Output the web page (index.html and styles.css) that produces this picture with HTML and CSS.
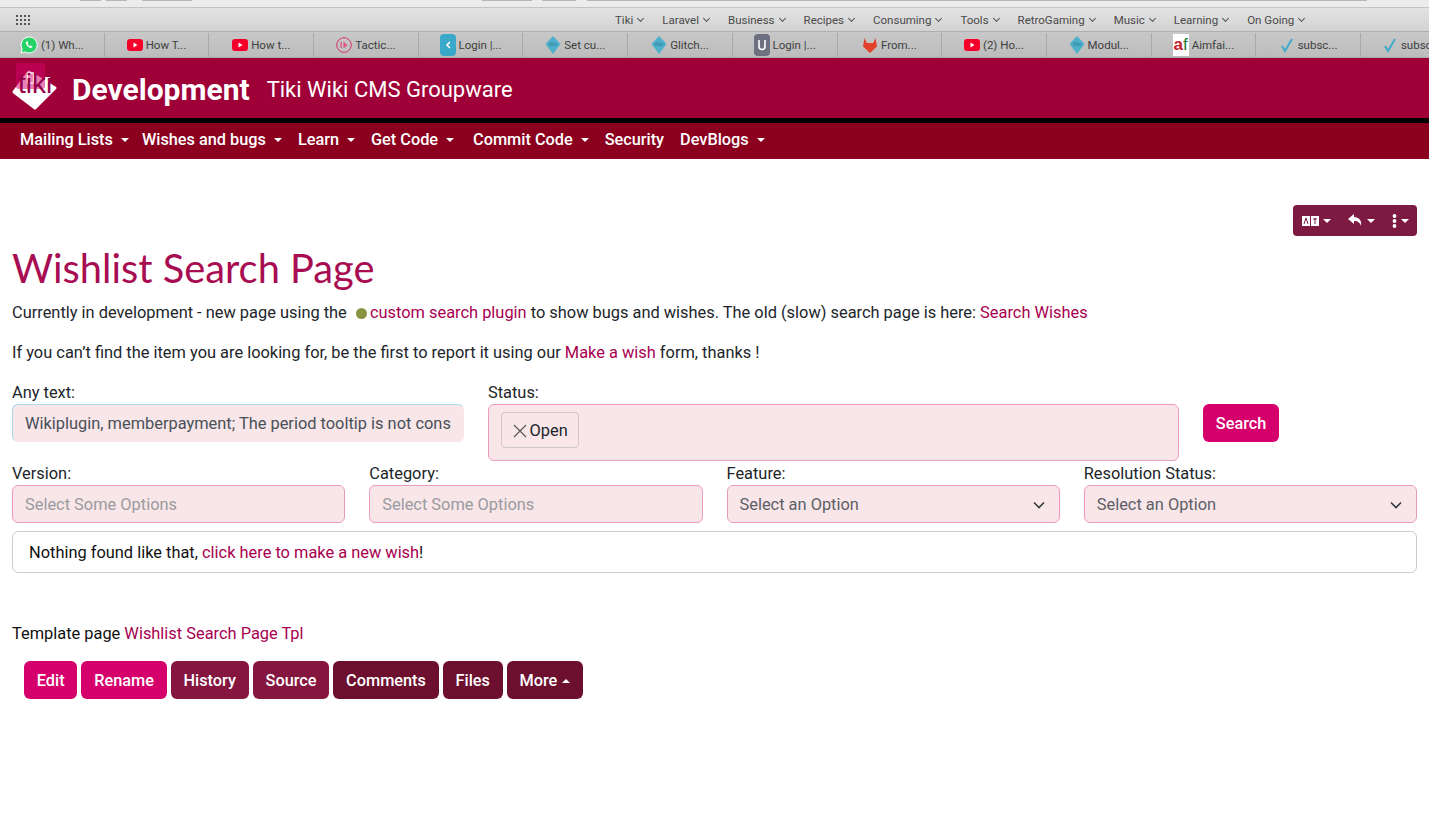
FILE: index.html
```html
<!DOCTYPE html>
<html lang="en">
<head>
  <meta charset="UTF-8">
  <title>Wishlist Search Page</title>
  <link rel="stylesheet" href="styles.css">
</head>
<body>
  <div class="browser-top">
    <span class="top-btn tb1"></span><span class="top-btn tb2"></span><span class="top-btn tb3"></span>
    <span class="top-btn tb4"></span><span class="top-btn tb5"></span><span class="top-url"></span>
  </div>
  <div class="bookmarks">
    <svg class="apps" width="15" height="11" viewBox="0 0 15 11" fill="#555">
      <rect x="0" y="0" width="2" height="2"/><rect x="4" y="0" width="2" height="2"/><rect x="8" y="0" width="2" height="2"/><rect x="12" y="0" width="2" height="2"/>
      <rect x="0" y="4" width="2" height="2"/><rect x="4" y="4" width="2" height="2"/><rect x="8" y="4" width="2" height="2"/><rect x="12" y="4" width="2" height="2"/>
      <rect x="0" y="8" width="2" height="2"/><rect x="4" y="8" width="2" height="2"/><rect x="8" y="8" width="2" height="2"/><rect x="12" y="8" width="2" height="2"/>
    </svg>
    <div class="bookmark-items">
      <span>Tiki<i></i></span><span>Laravel<i></i></span><span>Business<i></i></span><span>Recipes<i></i></span>
      <span>Consuming<i></i></span><span>Tools<i></i></span><span>RetroGaming<i></i></span><span>Music<i></i></span>
      <span>Learning<i></i></span><span>On Going<i></i></span>
    </div>
  </div>
  <div class="tabs">
    <div class="tab"><svg width="18" height="18" viewBox="0 0 18 18"><path d="M9 1a8 8 0 0 0-6.800 12L1 17l4.100-1.100A8 8 0 1 0 9 1z" fill="#25d366" stroke="#fff" stroke-width="1"/><path d="M6.500 5.500c-1 1-.8 2.500.5 4s3 2.700 4.300 2.300c1-.3 1.400-1 1.200-1.500l-1.700-.9-.8.800c-1-.4-2-1.400-2.400-2.400l.7-.8-.8-1.700z" fill="#fff"/></svg>(1) Wh...</div>
    <div class="tab"><svg width="16" height="12" viewBox="0 0 16 12"><rect width="16" height="12" rx="3" fill="#f5002a"/><path d="M6.500 3.500l4 2.500-4 2.500z" fill="#fff"/></svg>How T...</div>
    <div class="tab"><svg width="16" height="12" viewBox="0 0 16 12"><rect width="16" height="12" rx="3" fill="#f5002a"/><path d="M6.500 3.500l4 2.500-4 2.500z" fill="#fff"/></svg>How t...</div>
    <div class="tab"><svg width="16" height="18" viewBox="0 0 16 18"><circle cx="8" cy="9" r="7.300" fill="none" stroke="#d6336c"/><path d="M7.500 5.500l4 3.500-4 3.500z" fill="#e0558a"/><rect x="4.500" y="6" width="1.300" height="6" fill="#e0558a"/></svg>Tactic...</div>
    <div class="tab"><svg width="16" height="22" viewBox="0 0 16 22"><rect width="16" height="22" rx="4" fill="#3aa8c9"/><path d="M10 8l-3 3 3 3" fill="none" stroke="#fff" stroke-width="1.500"/></svg>Login |...</div>
    <div class="tab"><svg width="16" height="20" viewBox="0 0 16 20"><path d="M8 1l7.500 8L8 19 .5 9z" fill="#4fb0cc"/><text x="8" y="11" class="tiny">tiki</text></svg>Set cu...</div>
    <div class="tab"><svg width="16" height="20" viewBox="0 0 16 20"><path d="M8 1l7.500 8L8 19 .5 9z" fill="#4fb0cc"/><text x="8" y="11" class="tiny">tiki</text></svg>Glitch...</div>
    <div class="tab"><svg width="16" height="22" viewBox="0 0 16 22"><rect width="16" height="22" rx="4" fill="#6c7080"/><path d="M5 6v6.500a3 3 0 0 0 6 0V6" fill="none" stroke="#fff" stroke-width="1.600"/></svg>Login |...</div>
    <div class="tab"><svg width="16" height="18" viewBox="0 0 16 18"><path d="M8 17L1 10.500 2.500 2l2.300 5h6.400L13.500 2 15 10.500z" fill="#e2432a"/></svg>From...</div>
    <div class="tab"><svg width="16" height="12" viewBox="0 0 16 12"><rect width="16" height="12" rx="3" fill="#f5002a"/><path d="M6.500 3.500l4 2.500-4 2.500z" fill="#fff"/></svg>(2) Ho...</div>
    <div class="tab"><svg width="16" height="20" viewBox="0 0 16 20"><path d="M8 1l7.500 8L8 19 .5 9z" fill="#4fb0cc"/><text x="8" y="11" class="tiny">tiki</text></svg>Modul...</div>
    <div class="tab"><span class="af"><b>a</b><em>f</em></span>Aimfai...</div>
    <div class="tab"><svg width="16" height="16" viewBox="0 0 16 16"><path d="M3 9l3 5L13 2" fill="none" stroke="#3fa9c9" stroke-width="2"/></svg>subsc...</div>
    <div class="tab tab-cut"><svg width="16" height="16" viewBox="0 0 16 16"><path d="M3 9l3 5L13 2" fill="none" stroke="#3fa9c9" stroke-width="2"/></svg>subsc</div>
  </div>

  <header class="site-header">
    <div class="logo">
      <svg class="logo-mark" width="46" height="48" viewBox="0 0 46 48">
        <path d="M2 28L17 8l26 16-20 20z" fill="#fff" stroke="#fff" stroke-width="3" stroke-linejoin="round"/>
        <rect x="4" y="-1" width="29" height="26" rx="3" fill="#d6006c" fill-opacity=".5"/>
        <rect x="15.500" y="9" width="6" height="10" fill="none" stroke="#fff" stroke-width="1.200"/>
        <rect x="33" y="13" width="5" height="6" fill="#fff"/>
      </svg>
      <span class="logo-tiki">tiki</span>
    </div>
    <span class="brand">Development</span>
    <span class="tagline">Tiki Wiki CMS Groupware</span>
  </header>
  <nav class="main-nav">
    <a class="nav-link caret">Mailing Lists</a>
    <a class="nav-link caret">Wishes and bugs</a>
    <a class="nav-link caret">Learn</a>
    <a class="nav-link caret">Get Code</a>
    <a class="nav-link caret">Commit Code</a>
    <a class="nav-link">Security</a>
    <a class="nav-link caret">DevBlogs</a>
  </nav>

  <main class="content">
    <div class="page-actions">
      <div class="action-group">
        <span class="act caret-s"><svg width="18" height="10" viewBox="0 0 18 10"><rect width="8" height="10" fill="#fff"/><rect x="9" width="8" height="10" fill="#fff"/><path d="M2 8l2-6 2 6" fill="none" stroke="#7d1a42" stroke-width="1"/><path d="M11 3h4M13 2v6" stroke="#7d1a42" stroke-width="1"/></svg></span>
        <span class="act caret-s"><svg width="16" height="13" viewBox="0 0 16 13"><path d="M6 0L0 5l6 5V7c4 0 6 1.500 7 5 1-6-2-8.500-7-9z" fill="#fff"/></svg></span>
        <span class="act caret-s"><svg width="6" height="14" viewBox="0 0 6 14" fill="#fff"><circle cx="2.500" cy="2" r="1.900"/><circle cx="2.500" cy="7" r="1.900"/><circle cx="2.500" cy="12" r="1.900"/></svg></span>
      </div>
    </div>

    <h1 class="page-title">Wishlist Search Page</h1>
    <p class="intro">Currently in development - new page using the <span class="dot"></span> <a>custom search plugin</a> to show bugs and wishes. The old (slow) search page is here: <a>Search Wishes</a></p>
    <p class="intro">If you can’t find the item you are looking for, be the first to report it using our <a>Make a wish</a> form, thanks !</p>

    <div class="search-row">
      <div class="field field-text">
        <label>Any text:</label>
        <div class="control control-focus">Wikiplugin, memberpayment; The period tooltip is not cons</div>
      </div>
      <div class="field field-status">
        <label>Status:</label>
        <div class="control control-tall"><span class="chip"><svg width="14" height="14" viewBox="0 0 14 14"><path d="M1 1l12 12M13 1L1 13" stroke="#555" stroke-width="1.100"/></svg>Open</span></div>
      </div>
      <button class="btn btn-pink search-btn">Search</button>
    </div>

    <div class="filter-row">
      <div class="field"><label>Version:</label><div class="control placeholder">Select Some Options</div></div>
      <div class="field"><label>Category:</label><div class="control placeholder">Select Some Options</div></div>
      <div class="field"><label>Feature:</label><div class="control select">Select an Option<svg width="12" height="8" viewBox="0 0 12 8"><path d="M1 1.500l5 5 5-5" fill="none" stroke="#343a40" stroke-width="1.600"/></svg></div></div>
      <div class="field"><label>Resolution Status:</label><div class="control select">Select an Option<svg width="12" height="8" viewBox="0 0 12 8"><path d="M1 1.500l5 5 5-5" fill="none" stroke="#343a40" stroke-width="1.600"/></svg></div></div>
    </div>

    <div class="result-box">Nothing found like that, <a>click here to make a new wish</a>!</div>

    <p class="template-line">Template page <a>Wishlist Search Page Tpl</a></p>

    <div class="page-buttons">
      <button class="btn btn-pink">Edit</button>
      <button class="btn btn-pink">Rename</button>
      <button class="btn btn-mid">History</button>
      <button class="btn btn-mid">Source</button>
      <button class="btn btn-dark">Comments</button>
      <button class="btn btn-dark">Files</button>
      <button class="btn btn-dark caret-up">More</button>
    </div>
  </main>
</body>
</html>
```

FILE: styles.css
```css
* {
  box-sizing: border-box;
}
body {
  margin: 0;
  background: #fff;
  color: #212529;
  font-family: 'Roboto', 'Liberation Sans', sans-serif;
  font-size: 16.400px;
  line-height: 24px;
}
a {
  color: #a8004f;
}

/* browser chrome */
.browser-top {
  display: flex;
  height: 8px;
  background: #ececec;
  border-bottom: 1px solid #c4c4c4;
}
.top-btn, .top-url {
  display: block;
  height: 1px;
  background: #b5b5b5;
}
.tb1 { width: 21px; margin-left: 80px; }
.tb2 { width: 21px; margin-left: 5px; }
.tb3 { width: 50px; margin-left: 15px; }
.tb4 { width: 50px; margin-left: 290px; }
.tb5 { width: 34px; margin-left: 10px; }
.top-url { width: 780px; margin-left: 11px; }
.bookmarks {
  display: flex;
  align-items: center;
  height: 24px;
  padding: 1px 0 0 16px;
  background: linear-gradient(#e2e2e2, #d3d3d3);
  border-bottom: 1px solid #aeaeae;
}
.bookmark-items {
  display: flex;
  gap: 19px;
  margin-left: 584px;
  font-size: 11.500px;
  line-height: 14px;
  color: #4a4a4a;
}
.bookmark-items span {
  display: flex;
  align-items: center;
  gap: 5px;
}
.bookmark-items i {
  width: 5px;
  height: 5px;
  margin-top: -3px;
  border-right: 1.200px solid #555;
  border-bottom: 1.200px solid #555;
  transform: rotate(45deg);
}
.tabs {
  display: flex;
  height: 26px;
  padding-top: 1px;
  overflow: hidden;
  background: linear-gradient(#c8c8c8, #bcbcbc);
  border-bottom: 1px solid #a9a9a9;
}
.tab {
  flex: 0 0 104.700px;
  display: flex;
  align-items: center;
  justify-content: center;
  gap: 3px;
  border-right: 1px solid #a8a8a8;
  font-size: 11.500px;
  color: #3e3e3e;
  white-space: nowrap;
}
.tab svg {
  flex: none;
}
.tab-cut {
  justify-content: flex-start;
  padding-left: 21px;
  border-right: none;
}
.tiny {
  font-size: 6px;
  fill: #2a7f98;
  text-anchor: middle;
}
.af {
  display: flex;
  width: 16px;
  height: 22px;
  align-items: center;
  justify-content: center;
  background: #fff;
  font-family: 'Liberation Sans', sans-serif;
  font-size: 17px;
  line-height: 22px;
}
.af b { color: #c0202a; }
.af em { color: #1c7a32; font-style: normal; }

/* site header */
.site-header {
  display: flex;
  align-items: center;
  height: 65px;
  padding: 4px 12px 0;
  background: #9f0037;
  border-bottom: 5px solid #000;
  color: #fff;
}
.logo {
  position: relative;
  width: 46px;
  height: 48px;
  margin: -4px 14px 0 0;
}
.logo-mark {
  overflow: visible;
}
.logo-tiki {
  position: absolute;
  left: 6px;
  top: 8px;
  font-family: 'Liberation Sans', sans-serif;
  font-size: 28px;
  color: #96004a;
}
.brand {
  margin-right: 17px;
  font-size: 30px;
  font-weight: 700;
  line-height: 36px;
}
.tagline {
  font-size: 22px;
  font-weight: 400;
}
.main-nav {
  display: flex;
  align-items: center;
  gap: 16px;
  height: 36px;
  padding: 0 0 2px 20px;
  background: #8a001e;
}
.nav-link {
  color: #fff;
  font-size: 16.300px;
  font-weight: 500;
  display: flex;
  align-items: center;
}
.caret::after {
  content: "";
  margin-left: 8px;
  border-top: 4.500px solid #fff;
  border-left: 4px solid transparent;
  border-right: 4px solid transparent;
}
.nav-link:first-child {
  margin-right: -3px;
}
.nav-link:nth-child(4) {
  margin-right: 3px;
}

/* page */
.content {
  padding: 46px 12px 0;
}
.page-actions {
  display: flex;
  justify-content: flex-end;
}
.action-group {
  display: flex;
  align-items: center;
  gap: 17px;
  height: 31px;
  padding: 0 8px 0 9px;
  background: #7d1a42;
  border-radius: 4px;
}
.act {
  display: flex;
  align-items: center;
}
.caret-s::after {
  content: "";
  margin-left: 3px;
  border-top: 4px solid #fff;
  border-left: 4px solid transparent;
  border-right: 4px solid transparent;
}
.page-title {
  margin: 8px 0 8px;
  font-family: 'Lato', sans-serif;
  font-size: 39.800px;
  font-weight: 400;
  line-height: 48px;
  color: #a80d52;
}
.intro {
  margin: 0 0 15px;
  padding-top: 1px;
}
.dot {
  display: inline-block;
  width: 11px;
  height: 11px;
  margin: 0 -1px 0 5px;
  border-radius: 50%;
  background: #8a9440;
  vertical-align: -1px;
}
.field label {
  display: block;
  padding-top: 1px;
  line-height: 23px;
}
.control {
  display: flex;
  align-items: center;
  height: 38px;
  padding: 1px 12px 0;
  background: #f8e6e9;
  border: 1px solid #ec9abf;
  border-radius: 6px;
  color: #495057;
  overflow: hidden;
  white-space: nowrap;
}
.control-focus {
  border-color: #f8e6e9;
  border-top-color: #a6d8ee;
  border-left-color: #a6d8ee;
}
.control-tall {
  height: 57px;
  padding: 0 12px;
  align-items: flex-start;
}
.placeholder {
  color: #9a9a9f;
}
.select {
  justify-content: space-between;
  color: #5c5f66;
  padding-right: 14px;
}
.chip {
  display: flex;
  align-items: center;
  gap: 3px;
  height: 36px;
  margin-top: 7px;
  padding: 1px 10.500px 0;
  border: 1px solid #cfc9cc;
  border-radius: 4px;
  color: #212529;
}
.search-row {
  display: grid;
  grid-template-columns: 452px 691px auto;
  column-gap: 24px;
  align-items: start;
  margin-top: 15px;
}
.search-btn {
  justify-self: start;
  margin-top: 24px;
}
.filter-row {
  display: grid;
  grid-template-columns: repeat(4, 1fr);
  column-gap: 24px;
}
.result-box {
  height: 42px;
  margin-top: 8px;
  padding: 9px 16px 7px;
  border: 1px solid #ccc;
  border-radius: 6px;
  color: #111;
}
.template-line {
  margin: 49px 0 15px;
  color: #111;
}
.page-buttons {
  display: flex;
  gap: 4px;
  padding-left: 12px;
}
.btn {
  height: 38px;
  padding: 0 12.800px;
  border: none;
  border-radius: 6px;
  color: #fff;
  font-family: inherit;
  font-size: 16.300px;
  font-weight: 500;
}
.btn-pink { background: #d6006c; }
.btn-mid { background: #85163f; }
.btn-dark { background: #6d1030; }
.caret-up::after {
  content: "";
  display: inline-block;
  margin-left: 5px;
  vertical-align: 3px;
  border-bottom: 4px solid #fff;
  border-left: 4px solid transparent;
  border-right: 4px solid transparent;
}
```
